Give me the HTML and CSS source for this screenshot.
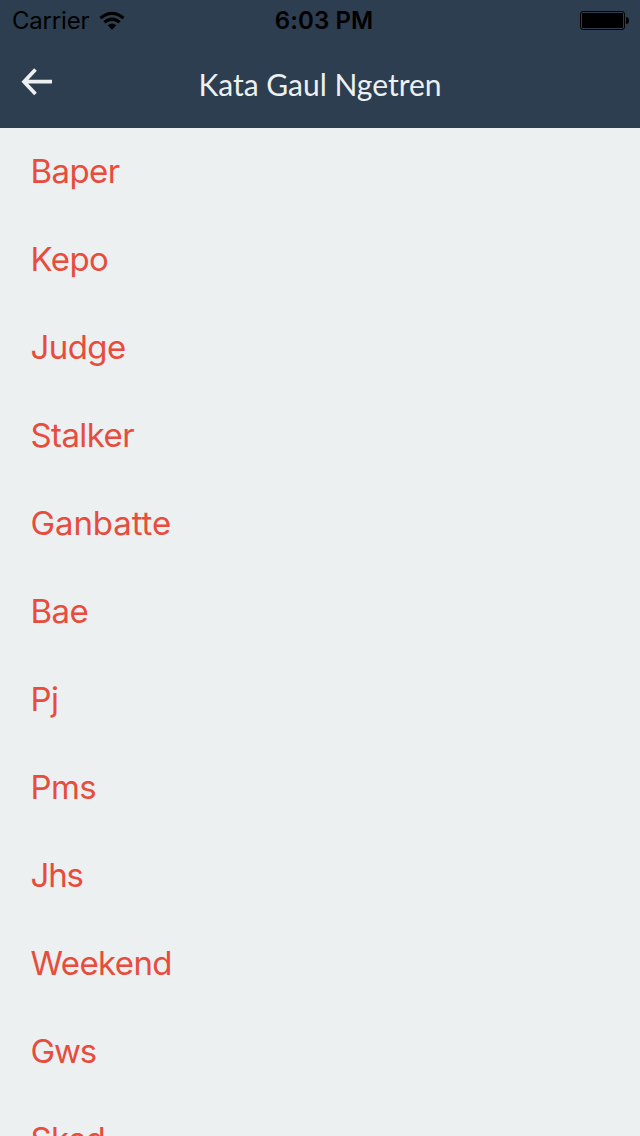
FILE: index.html
```html
<!DOCTYPE html>
<html lang="id">
<head>
<meta charset="utf-8">
<title>Kata Gaul Ngetren</title>
<link rel="stylesheet" href="styles.css">
</head>
<body>
<header class="header">
  <div class="status">
    <div class="carrier"><span class="carrier-name">Carrier</span>
      <svg class="wifi" width="26" height="20" viewBox="0 0 26 20"><g fill="none" stroke="#000" stroke-width="3.200"><path d="M1.500 7Q13-2.400 24.500 7"/><path d="M5.400 11.400Q13 4.800 20.600 11.400"/></g><path d="M8.700 14.300Q13 10.900 17.300 14.300L13 18.700Z"/></svg>
    </div>
    <div class="time">6:03 PM</div>
    <svg class="battery" width="50" height="20" viewBox="0 0 50 20"><rect x=".5" y=".5" width="44" height="18" rx="2.500" fill="none" stroke="#000"/><rect x="2" y="2" width="41" height="15" rx="1"/><path d="M46 6q3 0 3 3.500t-3 3.500z"/></svg>
  </div>
  <div class="nav">
    <svg class="back" width="32" height="28" viewBox="0 0 32 28"><path d="M14.500 1.500L3 13.700l11.500 12.200M3 13.700h28" fill="none" stroke="#ecf0f1" stroke-width="3.700"/></svg>
    <h1 class="title">Kata Gaul Ngetren</h1>
  </div>
</header>
<ul class="list">
  <li class="row"><span class="word">Baper</span></li>
  <li class="row"><span class="word">Kepo</span></li>
  <li class="row"><span class="word">Judge</span></li>
  <li class="row"><span class="word">Stalker</span></li>
  <li class="row"><span class="word loose">Ganbatte</span></li>
  <li class="row"><span class="word">Bae</span></li>
  <li class="row"><span class="word">Pj</span></li>
  <li class="row"><span class="word">Pms</span></li>
  <li class="row"><span class="word tight">Jhs</span></li>
  <li class="row"><span class="word">Weekend</span></li>
  <li class="row"><span class="word tight">Gws</span></li>
  <li class="row"><span class="word">Sksd</span></li>
</ul>
</body>
</html>
```
FILE: styles.css
```css
body {
  margin: 0;
  height: 1136px;
  overflow: hidden;
  background: #ecf0f1;
  font-family: Inter, sans-serif;
}
.header {
  height: 128px;
  background: #2c3e50;
}
.status {
  display: grid;
  grid-template-columns: 1fr auto 1fr;
  align-items: center;
  height: 41px;
  padding: 0 10px 0 12px;
  color: #000;
  font-size: 24px;
}
.carrier { display: flex; align-items: center; gap: 10px; }
.carrier-name { letter-spacing: -0.2px; }
.time {
  padding-left: 6px;
  font-weight: 600;
  letter-spacing: 0.1px;
}
.battery { justify-self: end; }
.nav {
  display: grid;
  grid-template-columns: 32px 1fr 32px;
  height: 87px;
  padding: 0 21px;
}
.back { margin-top: 27px; }
.title {
  margin: 23px 0 0;
  color: #ecf0f1;
  font: 400 30px/40px Lato, sans-serif;
  text-align: center;
}
.list { margin: 0; padding: 0; list-style: none; }
.row {
  display: flex;
  align-items: center;
  height: 88px;
  padding-left: 30.5px;
  color: #e74c3c;
  font-size: 33px;
  line-height: 40px;
}
.word {
  margin-top: -2px;
  letter-spacing: -0.6px;
}
.loose { letter-spacing: -0.1px; }
.tight { letter-spacing: -1.2px; }
```
